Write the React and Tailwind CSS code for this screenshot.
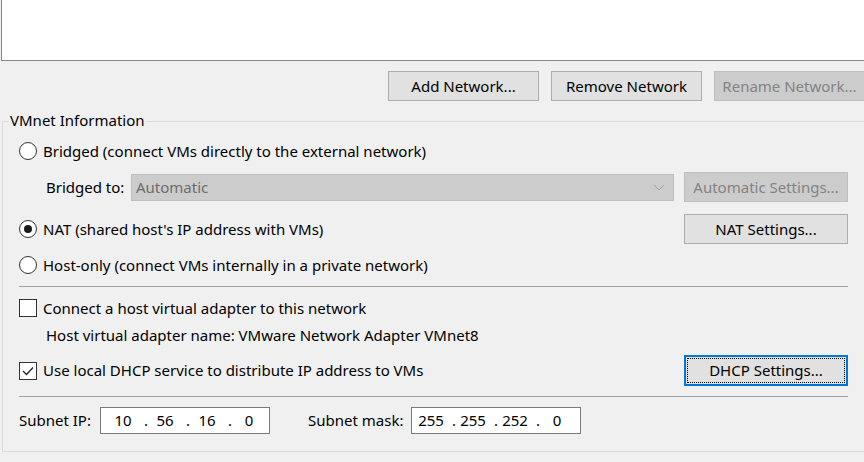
import React from 'react';

const font = { fontFamily: '"Noto Sans", "Liberation Sans", sans-serif' };

// radio button circle
function Radio({ checked }) {
  return (
    <span className="w-[18px] h-[18px] rounded-full border border-[#333333] bg-white flex items-center justify-center shrink-0">
      {checked && <span className="w-[8px] h-[8px] rounded-full bg-[#1a1a1a]" />}
    </span>
  );
}

function Check({ checked }) {
  return (
    <span className="w-[18px] h-[18px] border border-[#333333] bg-white flex items-center justify-center shrink-0">
      {checked && (
        <svg width="12" height="10" viewBox="0 0 12 10">
          <polyline points="1,5 4.5,8.5 11,1.5" fill="none" stroke="#222" strokeWidth="1.3" />
        </svg>
      )}
    </span>
  );
}

function Btn({ children, disabled, focused, className = '' }) {
  if (disabled) {
    return (
      <div className={`h-[30px] bg-[#cccccc] border border-[#bfbfbf] text-[#838383] flex items-center justify-center shrink-0 ${className}`}>
        {children}
      </div>
    );
  }
  if (focused) {
    return (
      <div className={`h-[31px] bg-[#e1e1e1] border-2 border-[#0078d7] flex items-center justify-center shrink-0 outline-1 outline-dotted outline-black outline-offset-[-4px] ${className}`}>
        {children}
      </div>
    );
  }
  return (
    <div className={`h-[30px] bg-[#e1e1e1] border border-[#adadad] flex items-center justify-center shrink-0 ${className}`}>
      {children}
    </div>
  );
}

// ip address control: fields with dots between
function IpBox({ parts, className = '' }) {
  return (
    <div className={`w-[170px] h-[27px] bg-white border border-[#7a7a7a] flex items-center ${className}`}>
      {parts.map((p, i) => (
        <React.Fragment key={i}>
          <span className="w-[34px] text-center shrink-0">{p}</span>
          {i < parts.length - 1 && <span className="w-[8px] text-right shrink-0">.</span>}
        </React.Fragment>
      ))}
    </div>
  );
}

export default function App() {
  return (
    <div className="w-[864px] h-[462px] bg-[#f0f0f0] overflow-hidden text-[15px] text-black leading-none" style={font}>
      {/* network list (white box) */}
      <div className="h-[61px] ml-px bg-white border-l border-b border-[#828790]" />

      {/* buttons under the list */}
      <div className="flex gap-[12px] pl-[388px] mt-[10px]">
        <Btn className="w-[151px]">Add Network...</Btn>
        <Btn className="w-[151px]">Remove Network</Btn>
        <Btn disabled className="w-[151px]">Rename Network...</Btn>
      </div>

      {/* VMnet Information group */}
      <div className="relative mt-[20px] ml-[2px] w-[900px] h-[331px] border border-[#dcdcdc] pl-[16px]">
        <span className="absolute left-[6px] top-[-9px] px-[1px] bg-[#f0f0f0]">VMnet Information</span>

        <div className="w-[829px] flex flex-col">
          <div className="h-[24px] mt-[17px] flex items-center gap-[6px]">
            <Radio />
            <span>Bridged (connect VMs directly to the external network)</span>
          </div>

          <div className="h-[30px] mt-[9px] flex items-center">
            <span className="w-[112px] pl-[27px]">Bridged to:</span>
            <div className="w-[543px] h-[27px] bg-[#cccccc] border border-[#bfbfbf] text-[#6d6d6d] flex items-center justify-between pl-[4px] pr-[8px]">
              <span>Automatic</span>
              <svg width="12" height="7" viewBox="0 0 12 7">
                <polyline points="1,1 6,6 11,1" fill="none" stroke="#a0a0a0" strokeWidth="1" />
              </svg>
            </div>
            <Btn disabled className="w-[164px] ml-[10px]">Automatic Settings...</Btn>
          </div>

          <div className="h-[30px] mt-[12px] flex items-center justify-between">
            <div className="flex items-center gap-[6px]">
              <Radio checked />
              <span>NAT (shared host's IP address with VMs)</span>
            </div>
            <Btn className="w-[164px]">NAT Settings...</Btn>
          </div>

          <div className="h-[24px] mt-[9px] flex items-center gap-[6px]">
            <Radio />
            <span>Host-only (connect VMs internally in a private network)</span>
          </div>

          <div className="h-px bg-[#a0a0a0] mt-[9px]" />

          <div className="h-[24px] mt-[9px] flex items-center gap-[6px]">
            <Check />
            <span>Connect a host virtual adapter to this network</span>
          </div>

          <div className="h-[24px] mt-[3px] flex items-center pl-[27px]">
            Host virtual adapter name: VMware Network Adapter VMnet8
          </div>

          <div className="h-[31px] mt-[8px] flex items-center justify-between">
            <div className="flex items-center gap-[6px]">
              <Check checked />
              <span>Use local DHCP service to distribute IP address to VMs</span>
            </div>
            <Btn focused className="w-[164px]">DHCP Settings...</Btn>
          </div>

          <div className="h-px bg-[#a0a0a0] mt-[10px]" />

          <div className="h-[27px] mt-[10px] flex items-center">
            <span className="w-[81px]">Subnet IP:</span>
            <IpBox parts={['10', '56', '16', '0']} className="pl-[5px]" />
            <span className="ml-[38px] w-[103px]">Subnet mask:</span>
            <IpBox parts={['255', '255', '252', '0']} className="pl-[2px]" />
          </div>
        </div>
      </div>
    </div>
  );
}
